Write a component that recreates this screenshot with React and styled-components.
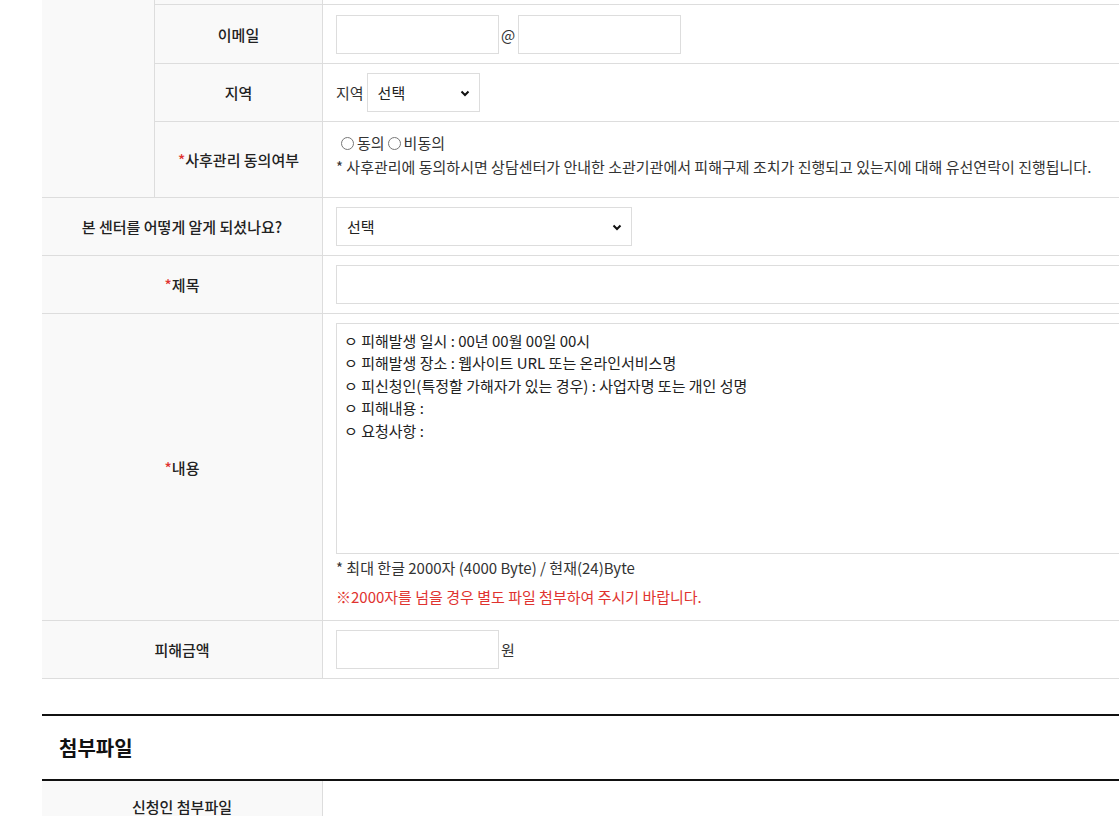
import React from "react";
import styled, { createGlobalStyle } from "styled-components";

const G = createGlobalStyle`
  *{box-sizing:border-box;}
  html,body{margin:0;padding:0;overflow:hidden;background:#fff;}
  body{font-family:"Noto Sans CJK KR","Noto Sans",sans-serif;color:#222;font-size:15px;}
`;
const Wrap = styled.div`margin-left:42px;width:1180px;`;
const Table = styled.div`display:grid;grid-template-columns:113px 168px 1fr;border-bottom:1px solid #ddd;`;
const Group = styled.div`grid-row:span ${p => p.$span};background:#f9f9f9;border-right:1px solid #ddd;`;
const Th = styled.div`
  grid-column:${p => p.$wide ? "1 / span 2" : "auto"};
  background:#f9f9f9;border-right:1px solid #ddd;border-top:${p => p.$nt ? "none" : "1px solid #ddd"};
  display:flex;align-items:center;justify-content:center;font-size:15px;font-weight:500;color:#222;
  height:${p => p.$h}px;
`;
const Td = styled.div`
  border-top:${p => p.$nt ? "none" : "1px solid #ddd"};height:${p => p.$h}px;padding:0 13px;
  display:flex;flex-direction:${p => p.$col ? "column" : "row"};align-items:${p => p.$col ? "flex-start" : "center"};
  justify-content:flex-start;
  padding-top:${p => p.$pt || 0}px;gap:${p => p.$gap || 0}px;color:#333;
`;
const Star = styled.span`color:#e0332f;`;
const Input = styled.div`width:${p => p.$w}px;height:39px;border:1px solid #ddd;background:#fff;`;
const Sel = styled.div`width:${p => p.$w}px;height:39px;border:1px solid #ddd;background:#fff;
  display:flex;align-items:center;justify-content:space-between;padding:0 8px 0 10px;font-size:15px;color:#222;`;
const Small = styled.span`font-size:15px;color:#333;margin:0 3px 0 2px;`;
const Radio = styled.span`display:inline-block;width:13px;height:13px;border:1px solid #777;border-radius:50%;margin:0 3px 0 5px;vertical-align:-1px;`;
const Note = styled.div`font-size:15px;color:#333;line-height:22px;`;
const Red = styled.div`font-size:15px;color:#e0332f;line-height:22px;`;
const Area = styled.div`width:820px;height:231px;border:1px solid #ddd;padding:6px 7px;font-size:15px;line-height:22.4px;color:#222;`;
const Sec = styled.div`margin-top:35px;border-top:2px solid #111;border-bottom:2px solid #111;height:67px;display:flex;align-items:center;padding-left:17px;font-size:20px;font-weight:700;color:#111;`;
const Row2 = styled.div`display:grid;grid-template-columns:281px 1fr;height:50px;`;

const Chev = () => (<svg width="12" height="12" viewBox="0 0 12 12"><path d="M2.5 4.5 6 8l3.5-3.5" fill="none" stroke="#111" strokeWidth="2"/></svg>);

export default function App(){
  return (<>
    <G/>
    <Wrap>
      <Table>
        <Group $span={4}/>
        <Th $nt $h={4}/><Td $nt $h={4}/>
        <Th $h={59}>이메일</Th>
        <Td $h={59}><Input $w={163}/><Small>@</Small><Input $w={163}/></Td>
        <Th $h={58}>지역</Th>
        <Td $h={58}><Small style={{marginLeft:0}}>지역</Small><Sel $w={113}>선택<Chev/></Sel></Td>
        <Th $h={76}><Star>*</Star>사후관리 동의여부</Th>
        <Td $h={76} $col $pt={10} $gap={2}>
          <Note><Radio/>동의<Radio style={{marginLeft:3}}/>비동의</Note>
          <Note>* 사후관리에 동의하시면 상담센터가 안내한 소관기관에서 피해구제 조치가 진행되고 있는지에 대해 유선연락이 진행됩니다.</Note>
        </Td>
        <Th $wide $h={58}>본 센터를 어떻게 알게 되셨나요?</Th>
        <Td $h={58}><Sel $w={296}>선택<Chev/></Sel></Td>
        <Th $wide $h={58}><Star>*</Star>제목</Th>
        <Td $h={58}><Input $w={820}/></Td>
        <Th $wide $h={307}><Star>*</Star>내용</Th>
        <Td $h={307} $col $pt={9} $gap={0}>
          <Area>
            ㅇ 피해발생 일시 : 00년 00월 00일 00시<br/>
            ㅇ 피해발생 장소 : 웹사이트 URL 또는 온라인서비스명<br/>
            ㅇ 피신청인(특정할 가해자가 있는 경우) : 사업자명 또는 개인 성명<br/>
            ㅇ 피해내용 :<br/>
            ㅇ 요청사항 :
          </Area>
          <Note style={{marginTop:3}}>* 최대 한글 2000자 (4000 Byte) / 현재(24)Byte</Note>
          <Red style={{marginTop:7}}>※2000자를 넘을 경우 별도 파일 첨부하여 주시기 바랍니다.</Red>
        </Td>
        <Th $wide $h={58}>피해금액</Th>
        <Td $h={58}><Input $w={163}/><Small>원</Small></Td>
      </Table>
      <Sec>첨부파일</Sec>
      <Row2><Th $nt $h={50}>신청인 첨부파일</Th><div/></Row2>
    </Wrap>
  </>);
}
